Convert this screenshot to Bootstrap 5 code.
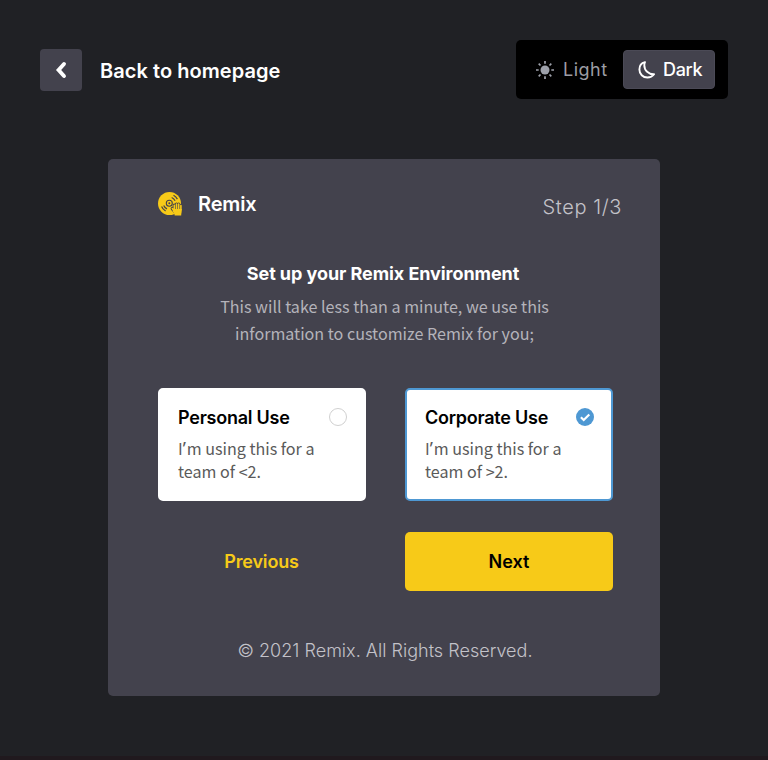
<!DOCTYPE html>
<html lang="en">
<head>
<meta charset="utf-8">
<meta name="viewport" content="width=device-width, initial-scale=1">
<title>Remix setup</title>
<link href="https://cdn.jsdelivr.net/npm/bootstrap@5.3.0/dist/css/bootstrap.min.css" rel="stylesheet">
<style>
body{background:#202125;font-family:Inter,"Liberation Sans",sans-serif;min-height:760px;border-bottom:4px solid #20191e}
a,button{text-decoration:none}
.page{padding:40px 40px 0}
.topbar{height:59px}
.back-box{width:42px;height:42px;background:#43424d;border-radius:4px;margin-top:1px}
.back-text{font-size:20px;font-weight:600;line-height:24px;margin-left:18px;margin-top:3px;letter-spacing:.05px}
.switcher{width:212px;height:59px;background:#000;border-radius:5px;padding:0 13px 0 20px}
.mode{font-size:18px;line-height:22px;letter-spacing:.5px}
.mode-light{color:#9c9da4}
.mode-dark{width:92px;height:39px;background:#43424d;border:1px solid #4b4a56;border-radius:4px;padding-left:14px;color:#fff;font-weight:500;letter-spacing:-.3px}
.mode span{white-space:nowrap;padding-left:1px}
.mode-dark .mode-label{padding-left:0;margin-left:7px}
.panel{width:552px;height:537px;margin:60px auto 0;background:#43424d;border-radius:5px;padding:0 47px 0 50px}
.panel-head{height:60px;padding-top:32px;margin-right:-9px}
.brand{font-size:20px;font-weight:600;line-height:26px;color:#fff;letter-spacing:-.15px}
.brand span{margin-left:14px;padding-top:0}
.step{font-size:20px;font-weight:300;line-height:24px;color:#c3c2c9;margin-top:4px;letter-spacing:.6px}
.intro{margin-top:43px}
.intro h1{font-size:18px;font-weight:700;line-height:24px;margin:0 0 7px -5px;color:#fff;letter-spacing:-.07px}
.intro p{font-family:"Noto Sans CJK SC",sans-serif;font-weight:400;font-size:16.1px;line-height:27px;color:#b4b3ba;margin:0 0 0 -2px}
.choices{display:grid;grid-template-columns:208px 208px;column-gap:39px;margin-top:41px}
.choice{height:113px;background:#fff;border-radius:5px;border:2px solid #fff;padding:16px 17px 0 18px}
.choice.active{border-color:#4e98d3}
.choice svg{margin-top:-2px}
.choice h2{font-size:18px;font-weight:600;line-height:24px;margin:0;color:#000;white-space:nowrap;letter-spacing:-.24px}
.choice p{font-family:"Noto Sans CJK SC",sans-serif;font-size:16.1px;line-height:23px;color:#5a5a5a;margin:7px 0 0}
.apos{font-family:"Noto Sans",sans-serif;line-height:1;font-size:18px;letter-spacing:.8px}
.actions{display:grid;grid-template-columns:208px 208px;column-gap:39px;margin-top:31px}
.actions .btn{height:59px;border:0;border-radius:5px;font-size:18px;font-weight:600;padding:0;letter-spacing:-.15px}
.actions .btn-prev{color:#f7ca18;padding-right:1px}
.actions .btn-next,.actions .btn-next:hover{background:#f7ca18;color:#000;letter-spacing:0}
.legal{font-size:18px;font-weight:300;line-height:24px;color:#c3c2c9;margin:48px 0 0 -1px;letter-spacing:.02px}
.t{display:inline-block;white-space:nowrap}
</style>
</head>
<body>
<main class="page">
  <header class="topbar d-flex justify-content-between align-items-center">
    <a href="#" class="d-flex align-items-center text-white">
      <span class="back-box d-flex align-items-center justify-content-center">
        <svg width="14" height="18" viewBox="0 0 14 18"><path d="M10 3 4.600 9l5.400 6" fill="none" stroke="#fff" stroke-width="3.900" stroke-linecap="round" stroke-linejoin="miter"/></svg>
      </span>
      <span class="back-text t">Back to homepage</span>
    </a>
    <div class="switcher d-flex align-items-center justify-content-between">
      <a href="#" class="mode mode-light d-flex align-items-center">
        <svg width="18" height="18" viewBox="0 0 18 18"><circle cx="9" cy="9" r="4.500" fill="#9da0aa"/><path d="M9 0v2.700M9 15.300V18M0 9h2.700M15.300 9H18M2.700 2.700l1.800 1.800M13.500 13.500l1.800 1.800M2.700 15.300l1.800-1.800M13.500 4.500l1.800-1.800" stroke="#9da0aa" stroke-width="1.700"/></svg>
        <span class="ms-2">Light</span>
      </a>
      <a href="#" class="mode mode-dark d-flex align-items-center">
        <svg width="18" height="18" viewBox="0 0 18 18"><path d="M7 1.200C3.700 2 1.400 4.800 1.400 8.500c0 4.600 3.500 8 8 8 2.800 0 5.200-1.300 6.700-3.300C10.600 13.500 6.300 9.500 6.300 4.200c0-1 .3-2.100.7-3z" fill="none" stroke="#fff" stroke-width="1.900" stroke-linejoin="round"/></svg>
        <span class="mode-label">Dark</span>
      </a>
    </div>
  </header>

  <section class="panel">
    <div class="panel-head d-flex justify-content-between align-items-start">
      <div class="brand d-flex">
        <svg width="26" height="26" viewBox="0 0 26 26">
          <circle cx="11.500" cy="12.500" r="11.500" fill="#f7ca18"/>
          <g fill="none" stroke="#43424d">
            <circle cx="11.300" cy="12.300" r="3" stroke-width="1.100"/>
            <path d="M15.500 4.200c1.800.9 3 2.200 3.900 3.900M13.700 6.500c1.700.7 2.700 1.800 3.400 3.200M3.600 15.500c.8 2 2.100 3.400 4 4.400M5.700 14.500c.7 1.700 1.700 2.700 3.300 3.400" stroke-width="1.200"/>
          </g>
          <circle cx="11.300" cy="12.300" r="1" fill="#43424d"/>
          <path d="M16.300 17.500v-3.300M18.500 17.500v-4.400M20.700 17.500v-4.400M22.900 18.500v-3.900M14.300 17.600l2.600 3.200" stroke="#43424d" stroke-width="3.300" stroke-linecap="round"/>
          <path d="M16.300 19v-4.800M18.500 19v-5.900M20.700 19v-5.900M22.900 19v-4.400M14.300 17.600l2.600 3.200" stroke="#f7ca18" stroke-width="1.600" stroke-linecap="round"/>
          <path d="M15.500 18h8.200v2.200c0 1.400-.5 2-.5 4.300h-6.500c0-2-1.600-2.900-2.200-4.500z" fill="#f7ca18"/>
        </svg>
        <span class="t">Remix</span>
      </div>
      <div class="step t">Step 1/3</div>
    </div>

    <div class="intro text-center">
      <h1><span class="t">Set up your Remix Environment</span></h1>
      <p>This will take less than a minute, we use this<br>information to customize Remix for you;</p>
    </div>

    <div class="choices">
      <div class="choice">
        <div class="d-flex justify-content-between align-items-center">
          <h2>Personal Use</h2>
          <svg width="18" height="18" viewBox="0 0 18 18"><circle cx="9" cy="9" r="8.500" fill="#fff" stroke="#d0d0d0"/></svg>
        </div>
        <p>I<span class="apos">’</span>m using this for a<br>team of &lt;2.</p>
      </div>
      <div class="choice active">
        <div class="d-flex justify-content-between align-items-center">
          <h2>Corporate Use</h2>
          <svg width="18" height="18" viewBox="0 0 18 18"><circle cx="9" cy="9" r="9" fill="#4e98d3"/><path d="M4.900 9.200 7.700 12l5.600-5.500" fill="none" stroke="#fff" stroke-width="2.200"/></svg>
        </div>
        <p>I<span class="apos">’</span>m using this for a<br>team of &gt;2.</p>
      </div>
    </div>

    <div class="actions">
      <button type="button" class="btn btn-prev">Previous</button>
      <button type="button" class="btn btn-next">Next</button>
    </div>

    <p class="legal text-center"><span class="t">© 2021 Remix. All Rights Reserved.</span></p>
  </section>
</main>
<script src="https://cdn.jsdelivr.net/npm/bootstrap@5.3.0/dist/js/bootstrap.bundle.min.js"></script>
</body>
</html>
